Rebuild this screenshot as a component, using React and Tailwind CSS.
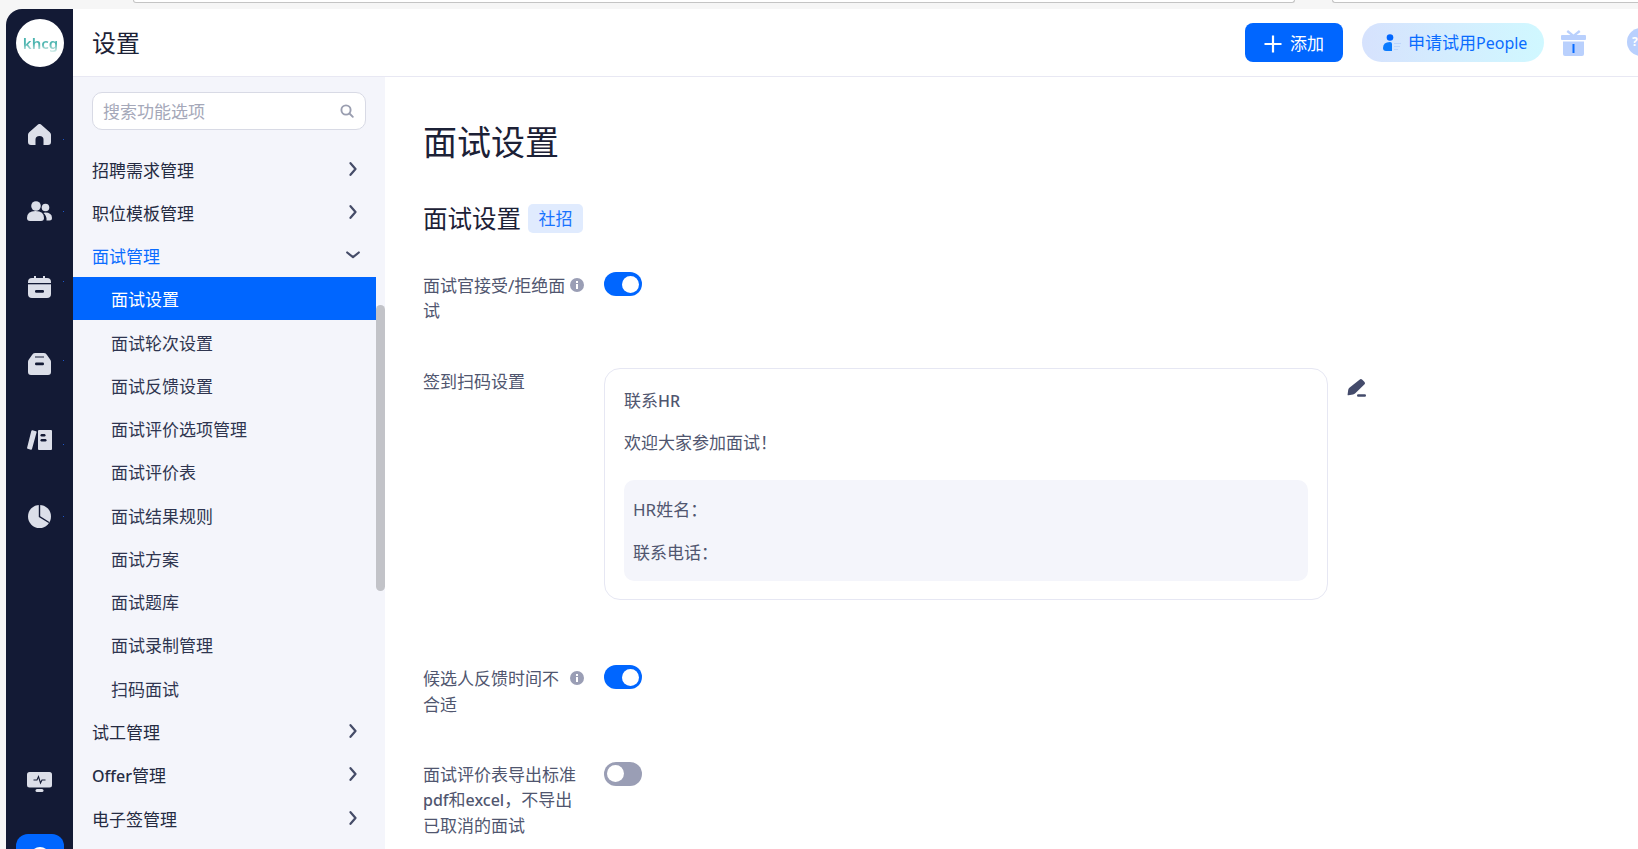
const railIcons = [
  { name: 'home', dot: 'top-[43px]' },
  { name: 'users', dot: 'top-[38px]' },
  { name: 'calendar', dot: 'top-[32px]' },
  { name: 'bag', dot: 'top-[34px]' },
  { name: 'book', dot: 'top-[42px]' },
  { name: 'pie', dot: 'top-[37px]' },
]

const subItems = [
  '面试设置',
  '面试轮次设置',
  '面试反馈设置',
  '面试评价选项管理',
  '面试评价表',
  '面试结果规则',
  '面试方案',
  '面试题库',
  '面试录制管理',
  '扫码面试',
]

const marks = Array.from({ length: 42 }, (_, i) => i)

function RailIcon({ name }) {
  const dark = '#131a35'
  const light = '#dcdfe9'
  if (name === 'home') {
    return (
      <svg width="23" height="21" viewBox="0 0 23 21" fill={light}>
        <path d="M10 .6a2.2 2.2 0 0 1 3 0l8.8 7.6q1.2 1 1.2 2.6V18q0 3-3 3h-4.500v-5.500q0-3.500-4-3.500t-4 3.500V21H3q-3 0-3-3v-7.200q0-1.600 1.200-2.600z" />
      </svg>
    )
  }
  if (name === 'users') {
    return (
      <svg width="25" height="20" viewBox="0 0 25 20" fill={light}>
        <circle cx="9" cy="5" r="4.800" />
        <path d="M0 17q0-7 8.500-7T17 17q0 3-3 3H3q-3 0-3-3z" />
        <circle cx="18.500" cy="6.500" r="3.800" />
        <path d="M18 11.500q7 0 7 5.500 0 2.500-2.500 2.500h-3q.5-4.500-3-7.500z" />
      </svg>
    )
  }
  if (name === 'calendar') {
    return (
      <svg width="23" height="22" viewBox="0 0 23 22">
        <path fill={light} d="M6 0h2v2h7V0h2v2h2q4 0 4 4v12q0 4-4 4H4q-4 0-4-4V6q0-4 4-4h2z" />
        <rect y="7" width="23" height="1.300" fill={dark} />
        <rect x="7" y="14" width="9" height="2.800" rx="1.200" fill={dark} />
      </svg>
    )
  }
  if (name === 'bag') {
    return (
      <svg width="23" height="22" viewBox="0 0 23 22">
        <path fill={light} d="M7 0h9q2 0 3 2l3.500 5q.5 1 .5 2v10q0 3-3 3H3q-3 0-3-3V9q0-1 .5-2L4 2q1-2 3-2z" />
        <rect x="7" y="3.500" width="9" height="1" fill={dark} />
        <rect x="7" y="9.500" width="9" height="2.800" rx="1.200" fill={dark} />
      </svg>
    )
  }
  if (name === 'book') {
    return (
      <svg width="25" height="20" viewBox="0 0 25 20">
        <path fill={light} d="M5.500.3l3.500 1q.8.3.6 1L5 19q-.3 1-1.200.700L.7 18.800q-.8-.3-.6-1L4.300 1q.3-1 1.200-.7z" />
        <rect x="11" width="14" height="20" rx="1" fill={light} />
        <rect x="13.500" y="4" width="5" height="2.400" rx="1.200" fill={dark} />
        <rect x="13.500" y="9" width="6" height="2.400" rx="1.200" fill={dark} />
      </svg>
    )
  }
  if (name === 'pie') {
    return (
      <svg width="23" height="23" viewBox="0 0 23 23">
        <circle cx="11.500" cy="11.500" r="11.500" fill={light} />
        <path d="M11.500 0v11.500L21 17.500" fill="none" stroke={dark} strokeWidth="1.400" />
      </svg>
    )
  }
  return null
}

function Chevron({ open }) {
  if (open) {
    return (
      <svg width="14" height="8" viewBox="0 0 14 8" fill="none" stroke="#454c68" strokeWidth="2.200" strokeLinecap="round" strokeLinejoin="round">
        <path d="M1.200 1.500 7 6.200l5.800-4.700" />
      </svg>
    )
  }
  return (
    <svg width="8" height="14" viewBox="0 0 8 14" fill="none" stroke="#454c68" strokeWidth="2.200" strokeLinecap="round" strokeLinejoin="round">
      <path d="M1.500 1.200 6.500 7l-5 5.800" />
    </svg>
  )
}

function InfoDot() {
  return (
    <svg width="14" height="14" viewBox="0 0 14 14" className="mt-[6px] shrink-0">
      <circle cx="7" cy="7" r="7" fill="#9a9eb5" />
      <rect x="6" y="6" width="2" height="5" fill="#fff" />
      <rect x="6" y="3" width="2" height="2" fill="#fff" />
    </svg>
  )
}

function Toggle({ on }) {
  return (
    <div className={`flex h-6 w-[38px] shrink-0 items-center rounded-full px-[3px] ${on ? 'justify-end bg-[#0066ff]' : 'justify-start bg-[#9a9eb5]'}`}>
      <div className="h-[17px] w-[17px] rounded-full bg-white" />
    </div>
  )
}

function MenuRow({ label, open, active }) {
  return (
    <div className={`flex h-[43.27px] items-center justify-between pl-[19px] pr-[16px] ${active ? 'text-[#0a6cff]' : 'text-[#252b42]'}`}>
      <span className="pt-[3px]">{label}</span>
      <span className="flex w-[14px] justify-center">
        <Chevron open={open} />
      </span>
    </div>
  )
}

export default function App() {
  return (
    <div className="relative h-[849px] w-[1638px] overflow-hidden bg-[#f6f6f6] font-['Noto_Sans','Noto_Sans_CJK_SC',sans-serif] text-[17px] leading-[25.2px]">
      {/* browser chrome sliver */}
      <div className="flex h-[9px]">
        <div className="ml-[133px] h-[3px] w-[1162px] rounded-b-xl border-x border-b border-[#c4c4c4] bg-white" />
        <div className="ml-[37px] h-[3px] flex-1 rounded-bl-xl border-b border-l border-[#c4c4c4] bg-white" />
      </div>

      <div className="flex h-[840px]">
        <div className="w-[6px] shrink-0" />

        {/* dark rail */}
        <div className="flex w-[67px] shrink-0 flex-col items-center overflow-hidden rounded-tl-[16px] bg-[#131a35]">
          <div className="mt-[10px] flex h-12 w-12 shrink-0 items-center justify-center rounded-full bg-white pl-[2px]">
            <span className="bg-gradient-to-b from-[#4db5b0] from-55% to-[#e6f6f3] bg-clip-text text-[15px] font-semibold leading-5 text-transparent">khcg</span>
          </div>
          <div className="mt-[29px] flex flex-col">
            {railIcons.map((it) => (
              <div key={it.name} className="relative flex h-[76.500px] w-[67px] items-center justify-center">
                <RailIcon name={it.name} />
                <span className={`absolute left-[57px] h-px w-px bg-[#1d56c9] ${it.dot}`} />
              </div>
            ))}
          </div>
          <div className="mt-auto flex flex-col items-center">
            <svg width="25" height="20" viewBox="0 0 25 20">
              <rect width="25" height="15.500" rx="2.500" fill="#dcdfe9" />
              <path d="M6.500 8h3.500l1.500-3.500 2 6.500 1.500-3h3.500" fill="none" stroke="#131a35" strokeWidth="1.100" />
              <rect x="8.500" y="17" width="8" height="3" rx="1.500" fill="#dcdfe9" />
            </svg>
            <div className="mt-[42px] -mb-[33px] flex h-12 w-12 justify-center rounded-xl bg-[#0066ff] pt-[13px]">
              <div className="h-5 w-5 rounded-full bg-white" />
            </div>
          </div>
        </div>

        <div className="flex min-w-0 flex-1 flex-col">
          {/* header */}
          <div className="flex h-[68px] shrink-0 items-center overflow-hidden border-b border-[#e8e8f3] bg-white pb-[1px] pl-[19px]">
            <span className="pt-[1px] text-[24px] text-[#1c2136]">设置</span>
            <button className="ml-auto flex h-[39px] w-[98px] items-center justify-center gap-[8px] rounded-lg bg-[#0066ff] pt-[3px] text-white">
              <svg width="18" height="18" viewBox="0 0 18 18" fill="none" stroke="#fff" strokeWidth="2.200">
                <path d="M9 .5v17M.5 9h17" />
              </svg>
              添加
            </button>
            <div className="ml-[19px] flex h-[39px] w-[182px] items-center rounded-full bg-gradient-to-r from-[#d6e2fd] to-[#d0f8ff] pl-[21px] text-[#0a6cff]">
              <svg width="19" height="17" viewBox="0 0 19 17">
                <circle cx="7" cy="3.500" r="3.300" fill="#0066ff" />
                <path d="M0 14q0-6 7-6 2 0 2 2v7H3q-3 0-3-3z" fill="#0a7bff" />
                <path d="M11 9.500h7M11 12.500h6M11 15.500h4" stroke="#bcd5fc" strokeWidth="1.200" />
              </svg>
              <span className="ml-[6px] pt-[3px]">申请试用<span className="text-[16px]">People</span></span>
            </div>
            <svg width="25" height="27" viewBox="0 0 25 27" fill="#b9d0fd" className="ml-[17px] shrink-0">
              <path d="M7 1l5.500 4.500L18 1l1.500 2-4 3H24q1 0 1 1v3q0 1-1 1H1q-1 0-1-1V7q0-1 1-1h8.500l-4-3z" />
              <path d="M2 12.500h21V25q0 2-2 2H4q-2 0-2-2z" />
              <rect x="11.500" y="15" width="2" height="9" fill="#0a6cff" />
            </svg>
            <div className="ml-[41px] -mr-[17px] flex h-7 w-7 shrink-0 items-center justify-start rounded-full bg-[#b9d0fd] pl-[5px] text-[12px] font-bold text-white">
              ?
            </div>
          </div>

          <div className="flex min-h-0 flex-1">
            {/* settings menu */}
            <div className="flex w-[312px] shrink-0 bg-[#f4f5fb]">
              <div className="w-[303px]">
                <div className="mx-[19px] mt-[15px] flex h-[38px] w-[274px] items-center justify-between rounded-[10px] border border-[#d8dae5] bg-white pl-[10px] pr-[11px]">
                  <span className="pt-[2px] text-[#a5a8b9]">搜索功能选项</span>
                  <svg width="14" height="14" viewBox="0 0 14 14" fill="none" stroke="#9a9eb0" strokeWidth="1.900" strokeLinecap="round">
                    <circle cx="6" cy="6" r="4.600" />
                    <path d="M9.500 9.500 12.800 12.800" />
                  </svg>
                </div>
                <div className="mt-[17px]">
                  <MenuRow label="招聘需求管理" />
                  <MenuRow label="职位模板管理" />
                  <MenuRow label="面试管理" open active />
                  {subItems.map((label, i) => (
                    <div
                      key={label}
                      className={`flex h-[43.27px] items-center pl-[38px] pt-[3px] ${i === 0 ? 'bg-[#0066ff] text-white' : 'text-[#2f3550]'}`}
                    >
                      {label}
                    </div>
                  ))}
                  <MenuRow label="试工管理" />
                  <MenuRow label={<><span className="text-[16px] font-medium">Offer</span>管理</>} />
                  <MenuRow label="电子签管理" />
                </div>
              </div>
              <div className="mt-[228px] h-[286px] w-[9px] rounded-full bg-[#c2c3c8]" />
            </div>

            {/* page content */}
            <div className="min-w-0 flex-1 bg-white pl-[38px] text-[#50566f]">
              <h1 className="mt-10 text-[34px] leading-[50px] text-[#1c2136]">面试设置</h1>
              <div className="mt-[37px] flex h-[29px] items-center">
                <h2 className="text-[24.500px] text-[#1c2136]">面试设置</h2>
                <span className="ml-[7px] flex h-[29px] w-[55px] items-center justify-center rounded-[5px] bg-[#e0ebfe] text-[#1772ff]">社招</span>
              </div>

              <div className="mt-[39px] flex">
                <div className="mr-[20px] flex w-[161px] justify-between">
                  <span className="pt-[1px]">面试官接受/拒绝面<br />试</span>
                  <InfoDot />
                </div>
                <Toggle on />
              </div>

              <div className="mt-[45px] flex">
                <div className="mr-[20px] w-[161px] pt-[1px]">签到扫码设置</div>
                <div className="h-[232px] w-[724px] rounded-2xl border border-[#e6e7f3] px-[19px] pt-[19px]">
                  <p>联系<span className="text-[16px] font-medium">HR</span></p>
                  <p className="mt-[15px]">欢迎大家参加面试！</p>
                  <div className="mt-[25px] h-[101px] rounded-[10px] bg-[#f4f5fb] px-[9px] pt-[17px]">
                    <p>HR姓名：</p>
                    <p className="mt-[18px]">联系电话：</p>
                  </div>
                </div>
                <svg width="20" height="18" viewBox="0 0 20 18" className="ml-[19px] mt-[11px]">
                  <path d="M12.500.8a2 2 0 0 1 2.800 0l2 2a2 2 0 0 1 0 2.800L8.300 14.300q-1 1-2.300 1.200L1.500 16.300q-1 .2-.9-.8L1.200 11q.2-1.300 1.200-2.300z" fill="#444b6b" />
                  <rect x="10" y="15.300" width="9" height="2.400" rx="1.200" fill="#444b6b" />
                </svg>
              </div>

              <div className="mt-[65px] flex">
                <div className="mr-[20px] flex w-[161px] justify-between">
                  <span className="pt-[1px]">候选人反馈时间不<br />合适</span>
                  <InfoDot />
                </div>
                <Toggle on />
              </div>

              <div className="mt-[45px] flex">
                <div className="mr-[20px] w-[161px]">
                  面试评价表导出标准<br />
                  <span className="text-[16px] font-medium">pdf</span>和<span className="text-[16px] font-medium">excel</span>，不导出<br />
                  已取消的面试
                </div>
                <Toggle />
              </div>
            </div>
          </div>
        </div>
      </div>

      {/* watermark sits over the menu and the content */}
      <div className="pointer-events-none absolute bottom-0 left-[73px] right-0 top-[77px] overflow-hidden">
        <div className="ml-[30px] mt-[39px] grid grid-cols-[repeat(7,245px)] auto-rows-[120px]">
          {marks.map((i) => (
            <div key={i} className="flex items-center justify-center">
              <div className="-rotate-30 whitespace-nowrap text-center text-[16.800px] leading-5 text-[rgba(30,40,80,0.025)]">
                盼盼 2025-08-19 17:56<br />lipanpan
              </div>
            </div>
          ))}
        </div>
      </div>
    </div>
  )
}
